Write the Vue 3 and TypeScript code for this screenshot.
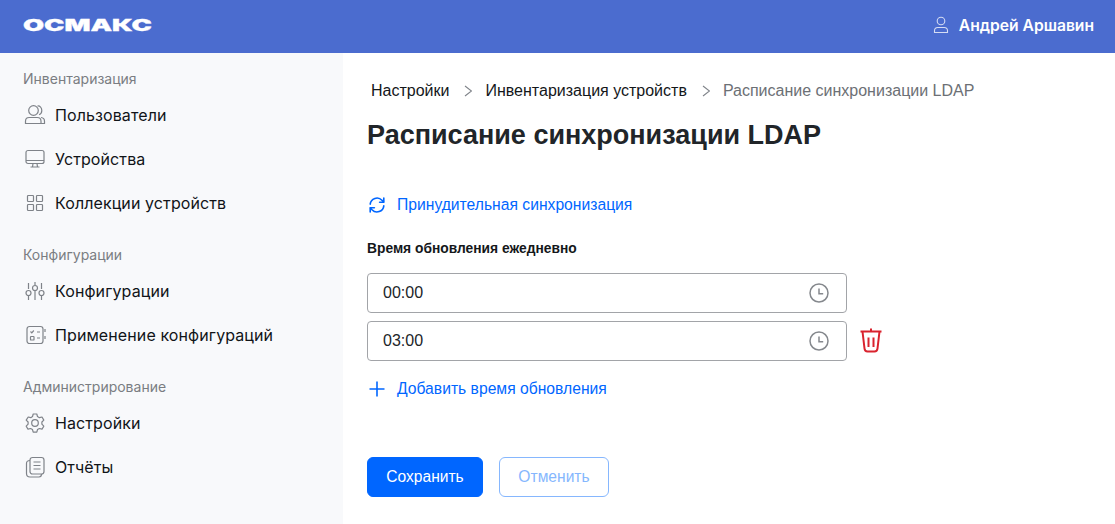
<script setup lang="ts">
type NavItem = { label: string; icon: string };
type NavGroup = { title: string; items: NavItem[] };

const groups: NavGroup[] = [
  {
    title: "Инвентаризация",
    items: [
      { label: "Пользователи", icon: "users" },
      { label: "Устройства", icon: "monitor" },
      { label: "Коллекции устройств", icon: "grid" },
    ],
  },
  {
    title: "Конфигурации",
    items: [
      { label: "Конфигурации", icon: "sliders" },
      { label: "Применение конфигураций", icon: "checklist" },
    ],
  },
  {
    title: "Администрирование",
    items: [
      { label: "Настройки", icon: "gear" },
      { label: "Отчёты", icon: "reports" },
    ],
  },
];

const times = ["00:00", "03:00"];
</script>

<template>
  <div class="page">
    <header class="topbar">
      <div class="logo"><span>ОСМАКС</span></div>
      <div class="user">
        <svg width="16" height="18" viewBox="0 0 16 18" fill="none" stroke="#d5dcf3" stroke-width="1.1">
          <circle cx="8" cy="5" r="3.8" />
          <path d="M1.5 16.5v-1.700c0-2 1.400-3.300 3.300-3.300h6.400c1.900 0 3.300 1.300 3.300 3.300v1.700z" />
        </svg>
        <span>Андрей Аршавин</span>
      </div>
    </header>
    <div class="body">
      <aside class="sidebar">
        <section v-for="g in groups" :key="g.title" class="group">
          <h4>{{ g.title }}</h4>
          <a v-for="item in g.items" :key="item.label" class="nav-item">
            <svg class="nav-icon" width="24" height="24" viewBox="0 0 24 24" fill="none" stroke="#7f8389" stroke-width="1.2">
              <template v-if="item.icon === 'users'">
                <circle cx="10.5" cy="7.5" r="4.8" />
                <path d="M14.5 3c2.500-.3 4.300 1.700 4.300 4.400 0 2-1 3.600-2.700 4.300" />
                <path d="M2.500 20.500v-2.300c0-2.400 1.700-3.700 3.700-3.700h8c2.100 0 3.800 1.400 3.800 3.700v2.300z" />
                <path d="M18 14.500c2 .2 3.500 1.700 3.500 3.700v2.300h-3.500" />
              </template>
              <template v-else-if="item.icon === 'monitor'">
                <rect x="3" y="3.500" width="18" height="13" rx="2" />
                <path d="M3 13.500h18M10 16.500l-.5 3.500M14 16.500l.5 3.500M7.500 20h9" />
              </template>
              <template v-else-if="item.icon === 'grid'">
                <rect x="4.500" y="4.500" width="6" height="6" rx=".8" />
                <rect x="13.500" y="4.500" width="6" height="6" rx=".8" />
                <rect x="4.500" y="13.500" width="6" height="6" rx=".8" />
                <rect x="13.500" y="13.500" width="6" height="6" rx=".8" />
              </template>
              <template v-else-if="item.icon === 'sliders'">
                <path d="M5.500 4v6M12 3v3M18.500 4v6M5.500 17v4M12 12v9M18.500 17v4" />
                <circle cx="5.500" cy="14" r="2.500" />
                <circle cx="12" cy="9" r="2.500" />
                <circle cx="18.500" cy="14" r="2.500" />
              </template>
              <template v-else-if="item.icon === 'checklist'">
                <rect x="4" y="3.500" width="16" height="17" rx="2.500" />
                <path d="M7.500 8.500l1.300 1.300 2-2.300M14 9h3M14 15h3M22 6v3M22 13v3" />
                <rect x="7.500" y="13.500" width="3.500" height="3.500" rx=".6" />
              </template>
              <template v-else-if="item.icon === 'gear'">
                <circle cx="12" cy="12" r="3.300" />
                <path d="M10.200 3h3.600l.7 2.600 1.900 1.100 2.600-.7 1.800 3.100-1.900 1.900v2.200l1.900 1.900-1.800 3.100-2.600-.7-1.900 1.100-.7 2.600h-3.600l-.7-2.600-1.900-1.100-2.600.7-1.800-3.100 1.900-1.900V11l-1.900-1.900L5.200 6l2.600.7 1.700-1.100z" stroke-linejoin="round" />
              </template>
              <template v-else>
                <rect x="7" y="2.500" width="14" height="16.500" rx="2.500" />
                <path d="M10.500 7h7M10.500 10.500h7M10.500 14h7" />
                <path d="M7 5.500c-2 0-3.500 1-3.500 3v10c0 2.200 1.500 3.500 3.500 3.500h9c1.500 0 2.500-1 2.500-3" />
              </template>
            </svg>
            <span>{{ item.label }}</span>
          </a>
        </section>
      </aside>

      <main class="content">
        <nav class="crumbs">
          <span>Настройки</span>
          <svg width="10" height="12" viewBox="0 0 10 12" fill="none" stroke="#7f8389" stroke-width="1.100"><path d="M3 1l6.500 5-6.500 5" /></svg>
          <span>Инвентаризация устройств</span>
          <svg width="10" height="12" viewBox="0 0 10 12" fill="none" stroke="#7f8389" stroke-width="1.100"><path d="M3 1l6.500 5-6.500 5" /></svg>
          <span class="current">Расписание синхронизации LDAP</span>
        </nav>
        <h1>Расписание синхронизации LDAP</h1>

        <a class="link sync">
          <svg width="20" height="20" viewBox="0 0 20 20" fill="none" stroke="#0066ff" stroke-width="1.600" stroke-linecap="round" stroke-linejoin="round">
            <path d="M3.200 9.200A6.800 6.800 0 0 1 15 5.300l1.500 1.800" />
            <path d="M16.800 3v4.300h-4.200" />
            <path d="M16.800 10.800A6.800 6.800 0 0 1 5 14.700l-1.500-1.800" />
            <path d="M3.200 17v-4.300h4.200" />
          </svg>
          <span>Принудительная синхронизация</span>
        </a>

        <div class="label">Время обновления ежедневно</div>

        <div class="times">
          <div v-for="(t, i) in times" :key="t" class="time-row">
            <div class="time-input">
              <span>{{ t }}</span>
              <svg width="20" height="20" viewBox="0 0 20 20" fill="none" stroke="#85888d" stroke-width="1.500">
                <circle cx="10" cy="10" r="9" />
                <path d="M10 5.500v5.300h4.200" />
              </svg>
            </div>
            <svg v-if="i > 0" class="trash" width="22" height="26" viewBox="0 0 22 26" fill="none" stroke="#d9232e" stroke-width="2">
              <path d="M0.500 3.500h21M11 0.500v3" />
              <path d="M2.500 3.500l2 17c.2 2 1.200 3 3 3h7c1.800 0 2.800-1 3-3l2-17" />
              <path d="M8.500 9.500v9.500M13.500 9.500v9.500" />
            </svg>
          </div>
        </div>

        <a class="link add">
          <svg width="20" height="20" viewBox="0 0 20 20" fill="none" stroke="#0066ff" stroke-width="1.600">
            <path d="M10 2.500v15M2.500 10h15" />
          </svg>
          <span>Добавить время обновления</span>
        </a>

        <div class="actions">
          <button class="btn primary">Сохранить</button>
          <button class="btn ghost">Отменить</button>
        </div>
      </main>
    </div>
  </div>
</template>

<style>
html,
body {
  margin: 0;
  background: #fff;
}
</style>

<style scoped>
.page {
  width: 1115px;
  height: 524px;
  overflow: hidden;
  display: flex;
  flex-direction: column;
  font-family: "Liberation Sans", Arial, sans-serif;
  color: #212529;
}

.topbar {
  height: 53px;
  flex: none;
  background: #4b6ccf;
  display: flex;
  align-items: center;
  justify-content: space-between;
  padding: 0 21px 3px 23px;
  box-sizing: border-box;
}

.logo {
  width: 129px;
  color: #fff;
  font-family: Inter, sans-serif;
  font-weight: 900;
  font-size: 16px;
  line-height: 20px;
  white-space: nowrap;
  -webkit-text-stroke: 0.3px #fff;
}

.logo span {
  display: inline-block;
  transform: scaleX(1.7);
  transform-origin: left center;
}

.user {
  display: flex;
  align-items: center;
  gap: 10px;
  color: #fff;
  font-family: Inter, sans-serif;
  font-weight: 600;
  font-size: 15.65px;
}

.body {
  flex: 1;
  display: flex;
  min-height: 0;
}

.sidebar {
  width: 343px;
  flex: none;
  background: #f8f9fb;
  padding-top: 15px;
  box-sizing: border-box;
  font-family: Inter, sans-serif;
}

.group {
  margin-bottom: 19px;
}

.group h4 {
  margin: 0 0 3px;
  padding-left: 23px;
  font-size: 14px;
  line-height: 22px;
  font-weight: 400;
  color: #7a7d82;
}

.nav-item {
  display: flex;
  align-items: center;
  height: 44px;
  padding-left: 23px;
  gap: 8px;
  font-size: 16px;
  letter-spacing: 0.1px;
  color: #111418;
}

.nav-icon {
  flex: none;
}

.content {
  flex: 1;
  padding: 27px 0 0 24px;
  background: #fff;
}

.crumbs {
  display: flex;
  align-items: center;
  gap: 13px;
  height: 22px;
  padding-left: 4px;
  font-size: 16px;
  color: #14171a;
}

.current {
  color: #6c7075;
}

h1 {
  margin: 15px 0 0;
  font-size: 27px;
  line-height: 36px;
  font-weight: 700;
  color: #212529;
}

.link {
  display: flex;
  align-items: center;
  gap: 10px;
  color: #0066ff;
  font-size: 15.68px;
  height: 24px;
}

.sync {
  margin-top: 40px;
}

.label {
  margin-top: 22px;
  font-size: 13.8px;
  line-height: 20px;
  font-weight: 700;
  color: #14171a;
}

.times {
  margin-top: 14px;
  display: flex;
  flex-direction: column;
  gap: 8px;
}

.time-row {
  display: flex;
  align-items: center;
  gap: 13px;
}

.time-input {
  width: 480px;
  height: 40px;
  box-sizing: border-box;
  border: 1px solid #a2a4a8;
  border-radius: 4px;
  display: flex;
  align-items: center;
  justify-content: space-between;
  padding: 0 17px 0 15px;
  font-size: 16px;
  color: #212529;
}

.add {
  margin-top: 16px;
}

.actions {
  margin-top: 56px;
  display: flex;
  gap: 16px;
}

.btn {
  height: 40px;
  box-sizing: border-box;
  border-radius: 6px;
  font-family: inherit;
  font-size: 15.6px;
  padding: 0;
}

.primary {
  width: 116px;
  background: #0066ff;
  border: 1px solid #0066ff;
  color: #fff;
}

.ghost {
  width: 110px;
  background: #fff;
  border: 1px solid #86b7fe;
  color: #86b7fe;
}
</style>
